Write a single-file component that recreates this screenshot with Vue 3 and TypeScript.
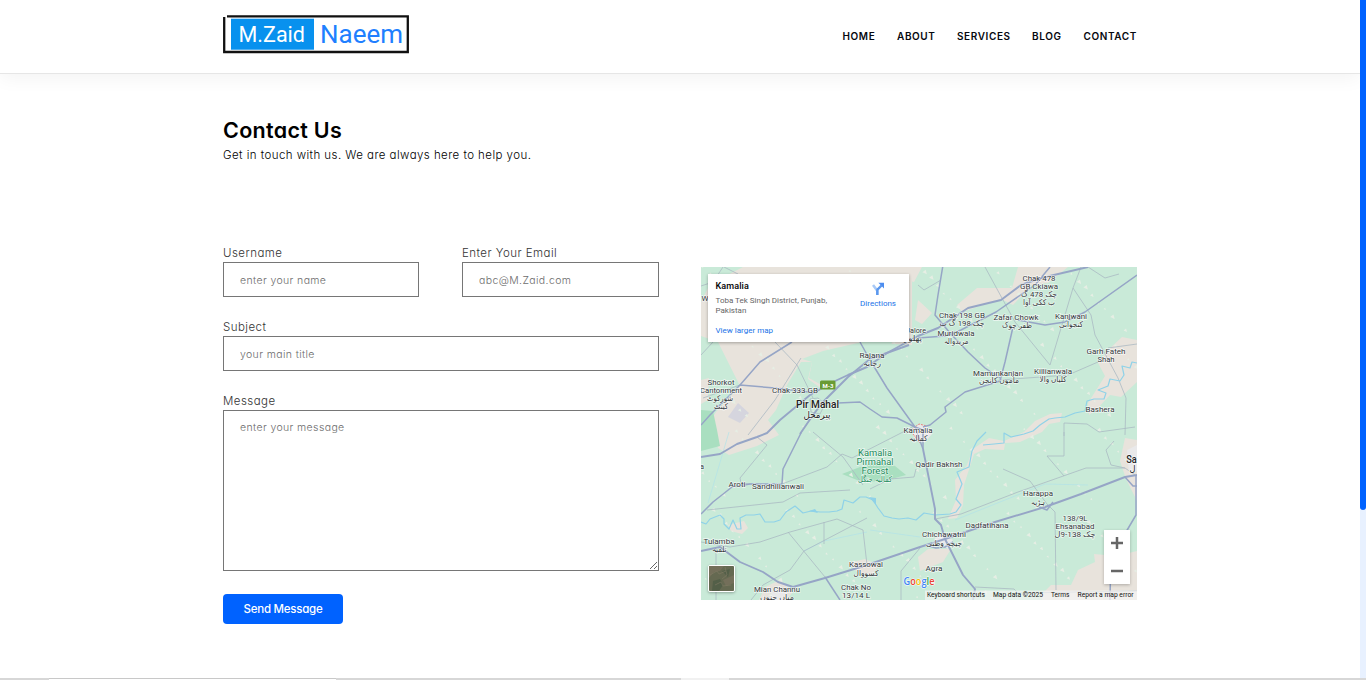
<script setup lang="ts">
interface Label {
  text: string
  x: number
  y: number
  w: number
  size?: number
  kind?: string
}

const links: string[] = ['HOME', 'ABOUT', 'SERVICES', 'BLOG', 'CONTACT']

const land: string[] = [
  '743,267 912,267 912,345 862,342 851,360 848,376 822,389 808,379 812,362 801,362 787,385 776,410 768,420 779,435 757,446 729,455 718,448 708,425 716,412 740,386 727,360 718,342 701,336 701,302 710,284',
  '904,267 922,267 914,282 905,280',
  '918,300 932,313 922,324 915,320',
  '977,288 1012,288 1018,267 1068,267 1058,275 1048,283 1032,285 1013,305 1001,299 962,312 957,305',
  '1137,340 1122,337 1108,350 1098,363 1105,376 1088,403 1089,415 1097,409 1110,395 1121,397 1137,382',
  '1035,421 1050,414 1062,413 1060,422 1049,424 1042,432 1020,442 1005,443 1004,450 985,449 974,454 964,485 963,505 957,518 948,519 956,500 955,480 967,465 973,449 989,438 1004,441 1024,432',
  '1137,440 1125,438 1120,461 1126,479 1137,501',
  '1137,551 1116,556 1094,554 1095,562 1078,570 1071,585 1051,585 1042,594 1042,600 1137,600',
  '928,549 951,549 943,562 920,571 918,557',
  '728,525 744,521 748,528 742,534 731,531',
  '765,587 780,580 793,592 786,600 759,600',
  '902,267 915,268 906,276',
  '848,563 865,559 879,565 872,575 858,573',
  '701,380 709,378 708,400 701,404',
]

const parks: string[] = [
  '701,410 713,411 717,430 720,446 701,451',
  '842,474 860,467 877,461 895,466 906,475 884,481 862,482',
]

const river: string[] = [
  'M701 522L706 524L710 519L720 515L724 519L724 524L729 529L733 520L737 529L741 529L740 518L746 515L754 515L760 514L765 522L774 522L780 520L786 512L795 506L803 513L811 511L820 512L829 512L837 511L842 509L844 500L853 503L860 497L866 497L873 500L878 508L884 516L892 518L899 519L908 518L916 520L924 513L935 515L950 514L956 512L961 505L956 499L962 484L957 472L969 467L972 451L977 441L986 432',
  'M983 445L994 444L1004 443L1004 433L1011 437L1024 434L1033 431L1040 425L1049 419L1055 418L1065 417L1075 413L1085 411L1087 401L1094 399L1104 399L1106 393L1098 390L1108 386L1110 379L1120 381L1124 375L1122 366L1130 368L1132 362L1137 363',
]

const highways: string[] = [
  'M701 457L720 454L737 444L757 437L767 433L780 420L810 395L833 382L848 375L867 367L887 353L918 336L938 328L968 308L1001 300L1021 285L1041 278L1088 267',
  'M800 434L813 415L823 402L848 377L870 359L909 345',
  'M701 551L720 547L740 562L763 572L778 582L793 587L825 578L867 565L920 547L945 539L995 522L1045 507L1081 494L1125 477L1137 475',
  'M923 449L935 509L935 519L941 525L945 539L963 575L975 589L973 600',
]

const roads: string[] = [
  'M740 385L760 362L792 342', 'M701 425L710 415L740 385L775 388L817 393',
  'M860 342L870 360L887 388L915 427L923 449', 'M838 403L860 402L870 409L882 417L897 418L915 427',
  'M943 265L938 295L935 315L950 333L968 352L985 368L1000 378',
  'M1050 267L1035 285L996 312L961 330L945 336L918 338',
  'M1018 320L1045 325L1065 322L1085 312L1137 275', 'M1013 327L1005 362L1000 381L965 392L945 407L946 412L930 425L923 427',
  'M915 427L923 430L923 449', 'M801 433L783 469L782 484L750 484L732 487L713 502L701 514',
  'M825 577L840 600', 'M1136 475L1136 515L1126 532L1111 550L1110 600', 'M1125 477L1133 486L1137 486',
  'M1039 507L1047 510L1053 502', 'M929 546L936 548L945 547L953 542',
]

const lanes: string[] = [
  'M775 342L797 365L813 398', 'M801 358L775 400L748 435', 'M701 355L713 342', 'M703 398L740 385',
  'M1081 267L1073 288L1050 365', 'M1073 288L1091 315L1095 335L1118 378L1126 398L1125 435',
  'M985 267L1015 322L1050 365', 'M1000 380L1068 375L1098 362', 'M757 437L767 445L740 478L741 483L760 485',
  'M813 432L843 457L863 485', 'M782 484L827 467L842 454L852 458L903 432L914 426', 'M707 510L783 502L800 493L850 490',
  'M701 542L730 547L760 542L790 532L837 519L863 530L867 565', 'M788 532L825 577', 'M824 522L824 544',
  'M935 519L961 514L1018 492L1086 468L1125 468L1135 475', 'M1064 432L1064 456L1047 456L1064 476',
  'M1003 469L1030 481L1047 504L1055 512L1056 590', 'M975 587L1014 589L1018 593L1137 591',
  'M1125 468L1111 465L1106 450L1114 441', 'M870 489L890 479L914 477L916 469', 'M1064 436L1064 423L1087 424L1099 432L1135 427',
  'M716 548L716 600', 'M751 600L763 585L790 570L804 551L867 518', 'M901 600L901 571L920 548', 'M701 286L713 282L723 267', 'M724 267L738 274', 'M918 285L924 290L941 280',
  'M1088 267L1105 278L1119 274', 'M1108 348L1137 344', 'M810 399L818 398L825 404L820 414L811 412Z',
]

const labels: Label[] = [
  { text: 'Chak 478', x: 1039, y: 280.5, w: 33 }, { text: 'GB Ckiawa', x: 1039, y: 289, w: 38 },
  { text: 'چک 478 گ', x: 1039, y: 297, w: 36 }, { text: 'ب ککی آوا', x: 1039, y: 305, w: 32 },
  { text: 'Chak 198 GB', x: 962, y: 318, w: 46 }, { text: 'چک 198 گ ب', x: 962, y: 326, w: 45 },
  { text: 'Zafar Chowk', x: 1016, y: 320, w: 45 }, { text: 'ظفر چوک', x: 1017, y: 328, w: 30 },
  { text: 'Kanjwani', x: 1071, y: 319, w: 32 }, { text: 'کنجوانی', x: 1071, y: 327, w: 24 },
  { text: 'Muridwala', x: 956, y: 336, w: 37 }, { text: 'مریدوالہ', x: 956, y: 344, w: 25 },
  { text: 'Jalore', x: 916, y: 333, w: 20 }, { text: 'پھلور', x: 913, y: 341, w: 18 },
  { text: 'Rajana', x: 872, y: 358, w: 25 }, { text: 'رجانہ', x: 872, y: 366, w: 18 },
  { text: 'Garh Fateh', x: 1106, y: 354, w: 39 }, { text: 'Shah', x: 1106, y: 362, w: 17 },
  { text: 'Mamunkanjan', x: 998, y: 375.5, w: 50 }, { text: 'ماموں کانجن', x: 999, y: 383, w: 40 },
  { text: 'Killianwala', x: 1053, y: 374, w: 38 }, { text: 'کلیاں والا', x: 1053, y: 382, w: 27 },
  { text: 'Shorkot', x: 721, y: 385, w: 27 }, { text: 'Cantonment', x: 721, y: 393, w: 42 },
  { text: 'شورکوٹ', x: 720, y: 401, w: 26 }, { text: 'کینٹ', x: 721, y: 409, w: 14 },
  { text: 'Chak 333 GB', x: 795, y: 393, w: 46 }, { text: 'Bashera', x: 1100, y: 412, w: 29 },
  { text: 'Pir Mahal', x: 817.5, y: 407.5, w: 43, size: 10, kind: 'town' }, { text: 'پیرمحل', x: 817, y: 418, w: 27, size: 9.5, kind: 'town' },
  { text: 'Kamalia', x: 918, y: 433, w: 29 }, { text: 'کمالیہ', x: 918, y: 441, w: 19 },
  { text: 'Kamalia', x: 875, y: 456, w: 34, size: 9.4, kind: 'forest' }, { text: 'Pirmahal', x: 875, y: 465, w: 37, size: 9.4, kind: 'forest' },
  { text: 'Forest', x: 875, y: 474, w: 27, size: 9.4, kind: 'forest' }, { text: 'کمالیہ جنگل', x: 875, y: 482, w: 34, kind: 'forest' },
  { text: 'Qadir Bakhsh', x: 939, y: 467, w: 47 }, { text: 'Aroti', x: 737, y: 487, w: 17 },
  { text: 'Sandhilianwali', x: 778, y: 489, w: 52 }, { text: 'Harappa', x: 1038, y: 496, w: 30 }, { text: 'ہڑپہ', x: 1038, y: 505, w: 14 },
  { text: 'Dadfatihana', x: 987, y: 528, w: 43 }, { text: '138/9L', x: 1075, y: 520.5, w: 25 },
  { text: 'Ehsanabad', x: 1075, y: 528.5, w: 39 }, { text: 'چک 138-9ل', x: 1075, y: 536.5, w: 41 },
  { text: 'Chichawatni', x: 944, y: 537, w: 44 }, { text: 'چیچہ وطنی', x: 944, y: 546, w: 36 },
  { text: 'Tulamba', x: 719, y: 544, w: 31 }, { text: 'تلمبہ', x: 719, y: 552, w: 15 },
  { text: 'Kassowal', x: 866, y: 567, w: 34 }, { text: 'کسووال', x: 866, y: 575.5, w: 25 },
  { text: 'Agra', x: 934, y: 571, w: 17 }, { text: 'Mian Channu', x: 777, y: 592, w: 46 }, { text: 'میاں چنوں', x: 777, y: 599.5, w: 34 },
  { text: 'Chak No', x: 856, y: 590, w: 30 }, { text: '13/14 L', x: 856, y: 598, w: 28 },
  { text: 'Sa', x: 1131.5, y: 463, w: 10.5, size: 10, kind: 'town' }, { text: 'ل', x: 1132.5, y: 472, w: 6, size: 9, kind: 'town' },
  { text: 'W', x: 705, y: 301, w: 7 }, { text: 'a', x: 702, y: 469, w: 4 },
]

// Small field markers scattered over the map.
const fields: string[] = Array.from({ length: 230 }, (_, i) => {
  const x = 701 + ((i * 137.508) % 436)
  const y = 267 + ((i * 83.217 + (i % 7) * 11) % 333)
  const s = 1.3 + (i % 3) * 0.6
  return `M${x.toFixed(1)} ${y.toFixed(1)}l${s * 1.3} ${-s}l${s * 0.5} ${s * 1.8}z`
})
</script>

<template>
  <div class="page">
    <header class="header">
      <div class="container bar">
        <svg class="logo" viewBox="223 14 187 40" width="187" height="40" role="img" aria-label="M.Zaid Naeem">
          <path d="M224.2 17V52H407.8V16.3H227" fill="none" stroke="#111" stroke-width="2.3" />
          <rect x="231" y="18.7" width="83" height="31" fill="#0891ee" />
          <text x="238.5" y="42" font-size="22.5" textLength="66.5" lengthAdjust="spacingAndGlyphs" fill="#fff">M.Zaid</text>
          <text x="320" y="42.6" font-size="26.5" textLength="83" lengthAdjust="spacingAndGlyphs" fill="#207fff">Naeem</text>
        </svg>
        <nav class="nav">
          <a v-for="link in links" :key="link">{{ link }}</a>
        </nav>
      </div>
    </header>

    <main class="container">
      <h1>Contact Us</h1>
      <p class="lead">Get in touch with us. We are always here to help you.</p>
      <div class="columns">
        <form class="form" @submit.prevent>
          <div class="row">
            <label class="field"><span>Username</span><input type="text" placeholder="enter your name" /></label>
            <label class="field"><span>Enter Your Email</span><input type="email" placeholder="abc@M.Zaid.com" /></label>
          </div>
          <label class="field"><span>Subject</span><input type="text" placeholder="your main title" /></label>
          <label class="field"><span>Message</span><textarea placeholder="enter your message"></textarea></label>
          <button type="submit">Send Message</button>
        </form>

        <section class="map">
          <svg viewBox="701 267 436 333" width="436" height="333">
            <rect x="701" y="267" width="436" height="333" fill="#c9ead8" />
            <polygon v-for="(p, i) in land" :key="'l' + i" :points="p" fill="#e8e3dc" />
            <polygon points="862,342 892,342 887,357 868,370 848,377 827,388 809,378 812,362 802,359 823,351" fill="#c9ead8" />
            <polygon v-for="(p, i) in parks" :key="'p' + i" :points="p" fill="#a9dfc0" />
            <polygon points="728,417 738,403 749,413 740,423" fill="#d5d5de" />
            <path :d="fields.join('')" fill="#e6eee4" />
            <path d="M729 432L708 503M867 532L824 541L804 551M870 530L920 537M955 520L1045 484L1088 485" fill="none" stroke="#b2e2e8" stroke-width=".7" />
            <path v-for="(d, i) in lanes" :key="'n' + i" :d="d" fill="none" stroke="#a8b7c2" stroke-width=".75" />
            <path v-for="(d, i) in river" :key="'r' + i" :d="d" fill="none" stroke="#8fd2e8" stroke-width="1.2" stroke-linejoin="round" />
            <path d="M869 497l7 1l0 7zM809 511l6-2l3 4z" fill="#8fd2e8" />
            <path d="M911 430l8-6l8 2l5 8l-8 9l-9-4zM1127 450l10-5v26l-8 3zM934 539l9-5l10 6l-5 9zM771 590l8-4l8 6l-2 8h-13z" fill="#e9e9ea" />
            <path d="M911 430l8-6l8 2M913 434l7 9" fill="none" stroke="#e9827c" stroke-width="1" stroke-dasharray="2 1" />
            <path v-for="(d, i) in roads" :key="'o' + i" :d="d" fill="none" stroke="#96a5c6" stroke-width="1.5" stroke-linejoin="round" />
            <path v-for="(d, i) in highways" :key="'h' + i" :d="d" fill="none" stroke="#96a5c6" stroke-width="1.9" stroke-linejoin="round" />
            <rect x="820" y="380.5" width="15.5" height="9" rx="1.5" fill="#6a9b35" />
            <text x="828" y="387.5" class="shield" text-anchor="middle">M-3</text>
            <text
              v-for="(l, i) in labels"
              :key="i"
              :x="l.x"
              :y="l.y"
              :font-size="l.size ?? 8"
              :textLength="l.w"
              lengthAdjust="spacingAndGlyphs"
              text-anchor="middle"
              :class="['place', l.kind]"
            >{{ l.text }}</text>
            <rect x="925" y="590.5" width="212" height="9.5" fill="#f5f5f5" fill-opacity=".7" />
            <g class="legal">
              <text x="927" y="597" textLength="58" lengthAdjust="spacingAndGlyphs">Keyboard shortcuts</text>
              <text x="993" y="597" textLength="50" lengthAdjust="spacingAndGlyphs">Map data ©2025</text>
              <text x="1051" y="597" textLength="18.5" lengthAdjust="spacingAndGlyphs">Terms</text>
              <text x="1077.5" y="597" textLength="56" lengthAdjust="spacingAndGlyphs">Report a map error</text>
            </g>
            <text class="google" x="903.5" y="585.3" textLength="31" lengthAdjust="spacingAndGlyphs"><tspan fill="#4285f4">G</tspan><tspan fill="#ea4335">o</tspan><tspan fill="#fbbc05">o</tspan><tspan fill="#4285f4">g</tspan><tspan fill="#34a853">l</tspan><tspan fill="#ea4335">e</tspan></text>
          </svg>
          <div class="card">
            <div class="place-info">
              <strong>Kamalia</strong>
              <p>Toba Tek Singh District, Punjab, Pakistan</p>
              <a>View larger map</a>
            </div>
            <div class="directions">
              <svg viewBox="0 0 12 13" width="12" height="13">
                <path d="M5.3 13V8.8L1 3" fill="none" stroke="#a9caf7" stroke-width="2.6" />
                <path d="M5.3 13V8.4Q5.3 7.6 6 7L9.5 3.5" fill="none" stroke="#5b98ee" stroke-width="2.4" />
                <path d="M6.4.8H12V6.4z" fill="#4c8df0" />
              </svg>
              <a>Directions</a>
            </div>
          </div>
          <div class="satellite">
            <svg viewBox="0 0 25 25" width="25" height="25">
              <rect width="25" height="25" fill="#656951" />
              <path d="M0 0h15l-4 5l-6 1l-5 6zM14 14l11-5v8l-8 3z" fill="#746f5a" />
              <path d="M4 15l7-2l3 6l-4 6H3zM13 5l8-2l-2 8z" fill="#535f48" />
              <path d="M1 9l7-4l2 3l7-3M6 19l6-3l2 4l8-1M16 1l2 8l-5 4" fill="none" stroke="#817c65" stroke-width=".6" />
            </svg>
          </div>
          <div class="zoom">
            <svg viewBox="0 0 26 54" width="26" height="54">
              <path d="M7 13H19M13 7V19M7 41H19" stroke="#666" stroke-width="2.5" />
            </svg>
          </div>
        </section>
      </div>
    </main>

    <div class="scroll-track"><div class="scroll-thumb"></div></div>
    <div class="bottom-edge"><i></i><b></b></div>
  </div>
</template>

<style>
body { margin: 0; overflow: hidden; background: #fff; }
</style>

<style scoped>
* { box-sizing: border-box; }
.page { position: relative; height: 680px; overflow: hidden; background: #fff; font-family: Inter, "Liberation Sans", sans-serif; font-feature-settings: "cv11"; }
.container { width: 914px; margin-left: 223px; }
.header { width: 1360px; height: 74px; border-bottom: 1px solid #e6e6e6; box-shadow: 0 4px 18px rgba(0, 0, 0, .05); }
.bar { display: flex; justify-content: space-between; padding-top: 14px; }
.logo { font-family: Roboto, sans-serif; }
.nav { display: grid; grid-template-columns: 54.5px 60px 75px 51.5px 53.5px; padding-top: 16px; font-size: 10px; line-height: 13px; font-weight: 600; letter-spacing: .6px; color: #06080f; white-space: nowrap; }
h1 { margin: 42px 0 0; font-size: 21.5px; line-height: 28px; font-weight: 600; letter-spacing: .3px; color: #000; }
.lead { margin: 3px 0 0; font-size: 11.5px; line-height: 16px; font-weight: 300; letter-spacing: .44px; color: #000; }
.columns { display: flex; justify-content: space-between; margin-top: 82px; }
.form { display: flex; flex-direction: column; width: 436px; gap: 22px; }
.row { display: grid; grid-template-columns: 196px 197px; gap: 43px; }
.field { display: flex; flex-direction: column; font-size: 11.5px; font-weight: 300; color: #333; letter-spacing: .46px; }
.field span { height: 17px; line-height: 16px; }
input, textarea { display: block; width: 100%; margin: 0; border: 1px solid #767676; border-radius: 0; background: #fff; outline: none; font: 300 10.5px/16px Inter, "Liberation Sans", sans-serif; font-feature-settings: "cv11"; letter-spacing: .38px; padding: 9px 16px 7px; }
input { height: 35px; }
textarea { height: 161px; resize: both; }
::placeholder { color: #6c6c6c; opacity: 1; }
button { width: 120px; height: 30px; margin-top: 1px; border: 0; border-radius: 4px; background: #0062ff; color: #fff; font: 500 11.5px/30px Inter, "Liberation Sans", sans-serif; font-feature-settings: "cv11"; letter-spacing: -.25px; padding: 0; }
.map { position: relative; width: 436px; height: 333px; margin-top: 22px; overflow: hidden; font-family: Roboto, "DejaVu Sans", sans-serif; font-feature-settings: normal; }
.map svg { display: block; }
.place { fill: #35383c; stroke: #fff; stroke-opacity: .7; stroke-width: 1.3px; paint-order: stroke; }
.town { fill: #222; font-weight: 500; }
.forest { fill: #218a5b; }
.shield { font-size: 6px; font-weight: 700; fill: #fff; }
.legal { font-size: 7px; fill: #111; }
.google { font: 600 10.5px "Open Sans", sans-serif; stroke: #fff; stroke-width: 1px; paint-order: stroke; }
.card { position: absolute; left: 7px; top: 7px; width: 201px; height: 68px; display: flex; justify-content: space-between; padding: 6px 13px 0 7.5px; background: #fff; box-shadow: 0 1px 3px rgba(0, 0, 0, .3); }
.place-info { width: 122px; }
.card strong { display: block; font-size: 9px; line-height: 12px; font-weight: 500; letter-spacing: .1px; color: #000; }
.card p { margin: 4px 0 0; font-size: 8px; line-height: 10px; color: #666; }
.card a { display: block; font-size: 8px; line-height: 10px; color: #1a73e8; white-space: nowrap; }
.place-info a { margin-top: 10px; }
.directions { display: flex; flex-direction: column; align-items: center; padding-top: 2px; }
.directions a { margin-top: 4px; }
.satellite { position: absolute; left: 7px; bottom: 8px; width: 27px; height: 27px; border: 1px solid #fff; border-radius: 2px; box-shadow: 0 1px 3px rgba(0, 0, 0, .3); overflow: hidden; }
.zoom { position: absolute; right: 7px; bottom: 16px; width: 26px; height: 54px; background: #fff; box-shadow: 0 1px 3px rgba(0, 0, 0, .25); }
.scroll-track { position: absolute; right: 0; top: 0; width: 6px; height: 678px; background: #e8f1ff; }
.scroll-thumb { height: 510px; background: #0062ff; border-radius: 0 0 3px 3px; }
.bottom-edge { position: absolute; left: 0; bottom: 0; display: flex; width: 100%; height: 2px; background: #d7d7d7; }
.bottom-edge i { width: 287px; margin-left: 49px; border-top: 1px solid #c8c8c8; background: #fff; }
.bottom-edge b { width: 48px; margin-left: 345px; background: #f1f1f1; }
</style>
